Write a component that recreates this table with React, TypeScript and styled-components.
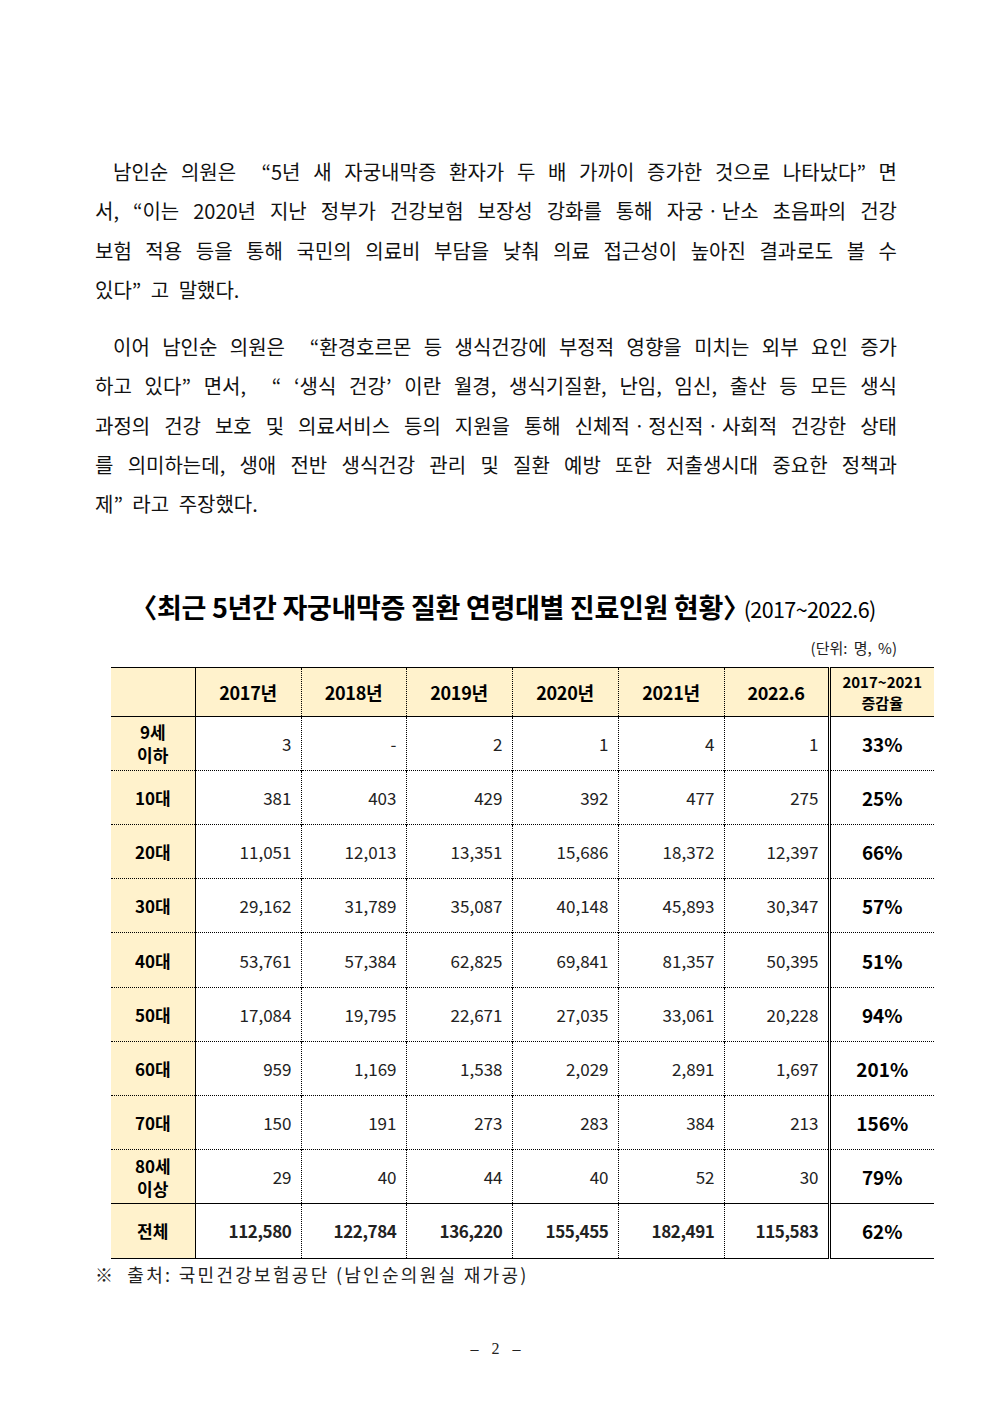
import React from "react";
import styled, { createGlobalStyle } from "styled-components";

const GlobalStyle = createGlobalStyle`
  html, body {
    margin: 0;
    padding: 0;
    background: #ffffff;
  }
  body {
    font-family: "Noto Sans CJK KR", "Noto Sans", sans-serif;
    color: #000;
  }
`;

const Page = styled.div`
  width: 992px;
  min-height: 1403px;
  box-sizing: border-box;
  padding: 152px 95px 0 95px;
`;

const Paragraph = styled.div<{ $gap?: number }>`
  font-size: 20px;
  line-height: 39.3px;
  color: #111;
  margin-top: ${(p) => p.$gap ?? 0}px;
`;

const Line = styled.span<{ $indent?: boolean; $last?: boolean }>`
  display: block;
  white-space: nowrap;
  text-align: ${(p) => (p.$last ? "left" : "justify")};
  text-align-last: ${(p) => (p.$last ? "left" : "justify")};
  text-indent: ${(p) => (p.$indent ? "18px" : "0")};
  word-spacing: ${(p) => (p.$last ? "5px" : "0")};
`;

const Title = styled.div`
  margin-top: 64px;
  padding-left: 14px;
  text-align: center;
  line-height: 38px;
  white-space: nowrap;
`;

const TitleMain = styled.span`
  font-size: 27px;
  font-weight: 700;
  letter-spacing: -0.3px;
`;

const TitleSub = styled.span`
  font-size: 21.5px;
  font-weight: 400;
  letter-spacing: -0.6px;
  margin-left: -6px;
`;

const Unit = styled.div`
  margin-top: 8px;
  text-align: right;
  font-size: 15px;
  line-height: 20px;
  word-spacing: 3px;
  color: #222;
`;

const Table = styled.table`
  margin-top: 9px;
  margin-left: 16px;
  width: 823px;
  border-collapse: collapse;
  table-layout: fixed;
  border-top: 1px solid #000;
  border-bottom: 1px solid #000;
`;

const HeadRow = styled.tr`
  height: 49px;
`;

const BodyRow = styled.tr<{ $total?: boolean }>`
  height: 54.2px;
  border-top: ${(p) => (p.$total ? "1px solid #000" : "1px dotted #000")};
`;

const HeadCell = styled.th<{ $kind?: "label" | "data" | "rate" }>`
  background: #fff2cc;
  font-weight: 700;
  font-size: ${(p) => (p.$kind === "rate" ? "15px" : "18px")};
  line-height: ${(p) => (p.$kind === "rate" ? "21px" : "24px")};
  letter-spacing: ${(p) => (p.$kind === "rate" ? "0" : "-0.3px")};
  text-align: center;
  padding: 0;
  border-bottom: 1px solid #000;
  border-right: ${(p) =>
    p.$kind === "label" ? "1px solid #000" : p.$kind === "rate" ? "none" : "1px dotted #000"};
  border-left: ${(p) => (p.$kind === "rate" ? "3px double #000" : "none")};
`;

const HeadLine = styled.span`
  display: block;
`;

const LabelCell = styled.td`
  background: #fff2cc;
  font-weight: 700;
  font-size: 17px;
  line-height: 23px;
  text-align: center;
  padding: 0;
  border-right: 1px solid #000;
`;

const DataCell = styled.td<{ $bold?: boolean }>`
  font-size: 17px;
  font-weight: ${(p) => (p.$bold ? 700 : 400)};
  letter-spacing: ${(p) => (p.$bold ? "-0.4px" : "0")};
  color: #222;
  text-align: right;
  padding: 0 9px 0 0;
  border-right: 1px dotted #000;
`;

const RateCell = styled.td`
  font-size: 19px;
  font-weight: 700;
  text-align: center;
  padding: 0;
  border-left: 3px double #000;
`;

const Source = styled.div`
  margin-top: 3px;
  font-size: 18px;
  line-height: 24px;
  letter-spacing: 2.3px;
  color: #222;
  display: flex;
  gap: 12px;
`;

const PageNo = styled.div`
  margin-top: 51px;
  display: flex;
  justify-content: center;
  gap: 13px;
  font-family: "Liberation Serif", "DejaVu Serif", serif;
  font-size: 16px;
  line-height: 24px;
  color: #222;
  padding-right: 1px;
`;

type Row = { label: React.ReactNode; values: string[]; rate: string; total?: boolean };

const rows: Row[] = [
  { label: <>9세<br />이하</>, values: ["3", "-", "2", "1", "4", "1"], rate: "33%" },
  { label: "10대", values: ["381", "403", "429", "392", "477", "275"], rate: "25%" },
  { label: "20대", values: ["11,051", "12,013", "13,351", "15,686", "18,372", "12,397"], rate: "66%" },
  { label: "30대", values: ["29,162", "31,789", "35,087", "40,148", "45,893", "30,347"], rate: "57%" },
  { label: "40대", values: ["53,761", "57,384", "62,825", "69,841", "81,357", "50,395"], rate: "51%" },
  { label: "50대", values: ["17,084", "19,795", "22,671", "27,035", "33,061", "20,228"], rate: "94%" },
  { label: "60대", values: ["959", "1,169", "1,538", "2,029", "2,891", "1,697"], rate: "201%" },
  { label: "70대", values: ["150", "191", "273", "283", "384", "213"], rate: "156%" },
  { label: <>80세<br />이상</>, values: ["29", "40", "44", "40", "52", "30"], rate: "79%" },
  {
    label: "전체",
    values: ["112,580", "122,784", "136,220", "155,455", "182,491", "115,583"],
    rate: "62%",
    total: true,
  },
];

const years = ["2017년", "2018년", "2019년", "2020년", "2021년", "2022.6"];
const colWidths = [84, 106, 105, 106, 106, 106, 105, 105];

export default function App() {
  return (
    <>
      <GlobalStyle />
      <Page>
        <Paragraph>
          <Line $indent>남인순 의원은 &nbsp;“5년 새 자궁내막증 환자가 두 배 가까이 증가한 것으로 나타났다” 면</Line>
          <Line>서, “이는 2020년 지난 정부가 건강보험 보장성 강화를 통해 자궁ㆍ난소 초음파의 건강</Line>
          <Line>보험 적용 등을 통해 국민의 의료비 부담을 낮춰 의료 접근성이 높아진 결과로도 볼 수</Line>
          <Line $last>있다” 고 말했다.</Line>
        </Paragraph>
        <Paragraph $gap={18}>
          <Line $indent>이어 남인순 의원은 &nbsp;“환경호르몬 등 생식건강에 부정적 영향을 미치는 외부 요인 증가</Line>
          <Line>하고 있다” 면서, &nbsp;“ ‘생식 건강’ 이란 월경, 생식기질환, 난임, 임신, 출산 등 모든 생식</Line>
          <Line>과정의 건강 보호 및 의료서비스 등의 지원을 통해 신체적ㆍ정신적ㆍ사회적 건강한 상태</Line>
          <Line>를 의미하는데, 생애 전반 생식건강 관리 및 질환 예방 또한 저출생시대 중요한 정책과</Line>
          <Line $last>제” 라고 주장했다.</Line>
        </Paragraph>

        <Title>
          <TitleMain>〈최근 5년간 자궁내막증 질환 연령대별 진료인원 현황〉</TitleMain>
          <TitleSub>(2017~2022.6)</TitleSub>
        </Title>
        <Unit>(단위: 명, %)</Unit>

        <Table>
          <colgroup>
            {colWidths.map((w, i) => (
              <col key={i} style={{ width: w }} />
            ))}
          </colgroup>
          <thead>
            <HeadRow>
              <HeadCell $kind="label" />
              {years.map((y) => (
                <HeadCell key={y} $kind="data">
                  {y}
                </HeadCell>
              ))}
              <HeadCell $kind="rate">
                <HeadLine>2017~2021</HeadLine>
                <HeadLine>증감율</HeadLine>
              </HeadCell>
            </HeadRow>
          </thead>
          <tbody>
            {rows.map((r, i) => (
              <BodyRow key={i} $total={r.total}>
                <LabelCell>{r.label}</LabelCell>
                {r.values.map((v, j) => (
                  <DataCell key={j} $bold={r.total}>
                    {v}
                  </DataCell>
                ))}
                <RateCell>{r.rate}</RateCell>
              </BodyRow>
            ))}
          </tbody>
        </Table>
        <Source>
          <span>※</span>
          <span>출처: 국민건강보험공단 (남인순의원실 재가공)</span>
        </Source>

        <PageNo>
          <span>–</span>
          <span>2</span>
          <span>–</span>
        </PageNo>
      </Page>
    </>
  );
}
